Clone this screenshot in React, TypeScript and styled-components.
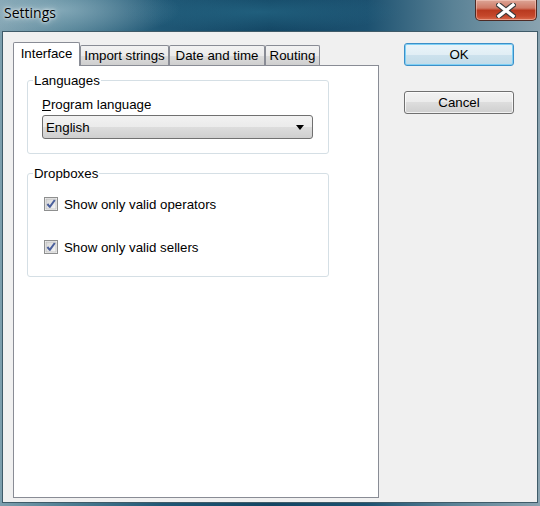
import styled, { createGlobalStyle } from "styled-components";

const GlobalStyle = createGlobalStyle`
  html, body {
    margin: 0;
    padding: 0;
  }
  body {
    font-family: "Liberation Sans", Arial, sans-serif;
    font-size: 13.3px;
    color: #000;
  }
`;

const Window = styled.div`
  width: 540px;
  height: 506px;
  display: flex;
  flex-direction: column;
  overflow: hidden;
  background:
    radial-gradient(ellipse 120px 30px at 60px 10px, rgba(190, 215, 225, 0.45), transparent),
    radial-gradient(ellipse 140px 20px at 260px 12px, rgba(40, 110, 140, 0.6), transparent),
    linear-gradient(90deg, #7d9fae 0%, #4f7f93 12%, #1f5775 30%, #134563 50%, #1c5170 68%, #5a8296 84%, #8aa3b0 100%);
`;

const TitleBar = styled.div`
  height: 31px;
  display: flex;
  align-items: flex-start;
  justify-content: space-between;
  flex-shrink: 0;
`;

const Title = styled.span`
  font-family: "Open Sans", "Noto Sans", sans-serif;
  font-size: 14px;
  line-height: 25px;
  padding-left: 4px;
  color: #000;
  text-shadow: 0 0 6px rgba(255, 255, 255, 0.9), 0 0 3px rgba(255, 255, 255, 0.9);
`;

const CloseButton = styled.div`
  width: 62px;
  height: 21px;
  margin-right: 3px;
  box-sizing: border-box;
  border: 1px solid #4d2a24;
  border-top: none;
  border-radius: 0 0 5px 5px;
  background: linear-gradient(#dca596 0%, #cf7a66 40%, #b9391f 52%, #c5472b 80%, #d86a4c 100%);
  box-shadow: inset 0 0 0 1px rgba(255, 220, 210, 0.45);
  display: flex;
  align-items: center;
  justify-content: center;
`;

const Client = styled.div`
  flex: 1;
  margin: 0 2px 3px 2px;
  border: 1px solid #3f5b69;
  background: #f0f0f0;
  display: flex;
  gap: 25px;
  padding: 10px 0 0 10px;
`;

const TabArea = styled.div`
  width: 366px;
  display: flex;
  flex-direction: column;
`;

const TabStrip = styled.div`
  display: flex;
  align-items: flex-end;
  height: 23px;
`;

const Tab = styled.div<{ $w: number; $active?: boolean }>`
  width: ${({ $w }) => $w}px;
  height: ${({ $active }) => ($active ? 24 : 20)}px;
  box-sizing: border-box;
  border: 1px solid #898c95;
  border-bottom: none;
  border-radius: 2px 2px 0 0;
  margin-bottom: ${({ $active }) => ($active ? -1 : 0)}px;
  position: relative;
  z-index: ${({ $active }) => ($active ? 1 : 0)};
  background: ${({ $active }) =>
    $active ? "#fff" : "linear-gradient(#f2f2f2 0%, #ebebeb 50%, #dddddd 50%, #cfcfcf 100%)"};
  display: flex;
  align-items: center;
  justify-content: center;
  padding-bottom: ${({ $active }) => ($active ? 2 : 0)}px;
  white-space: nowrap;
`;

const Panel = styled.div`
  flex: 1;
  margin-bottom: 4px;
  background: #fff;
  border: 1px solid #898c95;
  padding: 7px 0 0 13px;
`;

const Group = styled.fieldset<{ $pb: number; $mt?: number }>`
  width: 302px;
  box-sizing: border-box;
  margin: ${({ $mt }) => $mt ?? 0}px 0 0 0;
  padding: 0 0 ${({ $pb }) => $pb}px 14px;
  border: 1px solid #d5dfe5;
  border-radius: 3px;
  min-width: 0;
`;

const Legend = styled.legend`
  padding: 0 1px;
  margin-left: -9px;
  line-height: 15px;
`;

const FieldLabel = styled.div`
  line-height: 16px;
  margin-top: 9px;
  u {
    text-decoration: underline;
  }
`;

const Combo = styled.div`
  width: 271px;
  height: 24px;
  margin-top: 2px;
  box-sizing: border-box;
  border: 1px solid #707070;
  border-radius: 3px;
  background: linear-gradient(#f2f2f2 0%, #ebebeb 50%, #dddddd 50%, #cfcfcf 100%);
  display: flex;
  align-items: center;
  justify-content: space-between;
  padding: 0 8px 0 3px;
`;

const CheckRow = styled.div<{ $mt: number }>`
  display: flex;
  align-items: center;
  gap: 6px;
  height: 16px;
  margin: ${({ $mt }) => $mt}px 0 0 2px;
`;

const Side = styled.div`
  display: flex;
  flex-direction: column;
  gap: 25px;
  padding-top: 1px;
`;

const Button = styled.div<{ $default?: boolean }>`
  width: 110px;
  height: 23px;
  box-sizing: border-box;
  border: 1px solid ${({ $default }) => ($default ? "#3c8fc8" : "#707070")};
  border-radius: 3px;
  background: ${({ $default }) =>
    $default
      ? "linear-gradient(#eaf4f9 0%, #e1eef5 50%, #cde2ed 50%, #c2dbe8 100%)"
      : "linear-gradient(#f2f2f2 0%, #ebebeb 50%, #dddddd 50%, #cfcfcf 100%)"};
  box-shadow: ${({ $default }) =>
    $default ? "inset 0 0 0 1px #7fd0f5" : "inset 0 0 0 1px rgba(255,255,255,0.7)"};
  display: flex;
  align-items: center;
  justify-content: center;
`;

const CheckBox = () => (
  <svg width="14" height="14" viewBox="0 0 14 14">
    <defs>
      <linearGradient id="cbg" x1="0" y1="0" x2="1" y2="1">
        <stop offset="0" stopColor="#d6d6d6" />
        <stop offset="1" stopColor="#f6f6f6" />
      </linearGradient>
    </defs>
    <rect x="0.5" y="0.5" width="13" height="13" fill="#f4f4f4" stroke="#8e8f8f" />
    <rect x="2" y="2" width="10" height="10" fill="url(#cbg)" stroke="#b0b0b0" strokeWidth="0.6" />
    <path d="M3.4 7 L5.8 9.9 L10.8 3" fill="none" stroke="#4a5f9c" strokeWidth="2" strokeLinejoin="round" />
  </svg>
);

const App = () => {
  return (
    <>
      <GlobalStyle />
      <Window>
        <TitleBar>
          <Title>Settings</Title>
          <CloseButton>
            <svg width="20" height="15" viewBox="0 0 20 15">
              <path d="M3 2 L17 13 M17 2 L3 13" stroke="#3a3a3a" strokeWidth="5.5" strokeLinecap="square" />
              <path d="M3 2 L17 13 M17 2 L3 13" stroke="#fff" strokeWidth="3.4" strokeLinecap="square" />
            </svg>
          </CloseButton>
        </TitleBar>
        <Client>
          <TabArea>
            <TabStrip>
              <Tab $w={67} $active>Interface</Tab>
              <Tab $w={89}>Import strings</Tab>
              <Tab $w={96}>Date and time</Tab>
              <Tab $w={55}>Routing</Tab>
            </TabStrip>
            <Panel>
              <Group $pb={14}>
                <Legend>Languages</Legend>
                <FieldLabel>
                  <u>P</u>rogram language
                </FieldLabel>
                <Combo>
                  <span>English</span>
                  <svg width="8" height="5" viewBox="0 0 8 5">
                    <polygon points="0,0 8,0 4,5" fill="#000" />
                  </svg>
                </Combo>
              </Group>
              <Group $pb={21} $mt={12}>
                <Legend>Dropboxes</Legend>
                <CheckRow $mt={15}>
                  <CheckBox />
                  <span>Show only valid operators</span>
                </CheckRow>
                <CheckRow $mt={27}>
                  <CheckBox />
                  <span>Show only valid sellers</span>
                </CheckRow>
              </Group>
            </Panel>
          </TabArea>
          <Side>
            <Button $default>OK</Button>
            <Button>Cancel</Button>
          </Side>
        </Client>
      </Window>
    </>
  );
};

export default App;
